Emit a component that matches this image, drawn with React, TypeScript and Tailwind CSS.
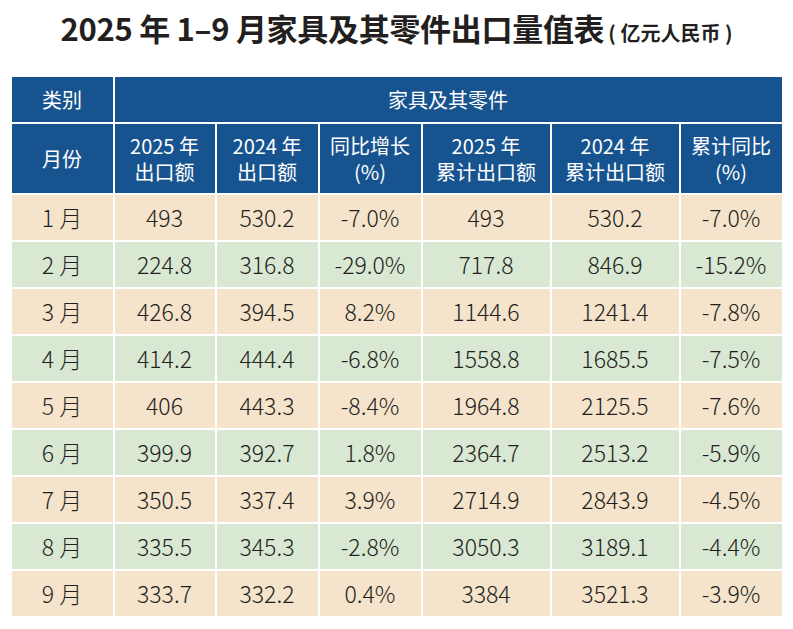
import React from 'react';

const rows: string[][] = [
    ['1 月', '493', '530.2', '-7.0%', '493', '530.2', '-7.0%'],
    ['2 月', '224.8', '316.8', '-29.0%', '717.8', '846.9', '-15.2%'],
    ['3 月', '426.8', '394.5', '8.2%', '1144.6', '1241.4', '-7.8%'],
    ['4 月', '414.2', '444.4', '-6.8%', '1558.8', '1685.5', '-7.5%'],
    ['5 月', '406', '443.3', '-8.4%', '1964.8', '2125.5', '-7.6%'],
    ['6 月', '399.9', '392.7', '1.8%', '2364.7', '2513.2', '-5.9%'],
    ['7 月', '350.5', '337.4', '3.9%', '2714.9', '2843.9', '-4.5%'],
    ['8 月', '335.5', '345.3', '-2.8%', '3050.3', '3189.1', '-4.4%'],
    ['9 月', '333.7', '332.2', '0.4%', '3384', '3521.3', '-3.9%'],
];

const heads: [string, string][] = [
    ['2025 年', '出口额'],
    ['2024 年', '出口额'],
    ['同比增长', '(%)'],
    ['2025 年', '累计出口额'],
    ['2024 年', '累计出口额'],
    ['累计同比', '(%)'],
];

const App: React.FC = () => {
    return (
        <div className="w-[793px] h-[629px] bg-white pt-[8px] font-['Noto_Sans_CJK_SC',sans-serif]">
            {/* 标题 */}
            <div className="flex items-baseline justify-center h-[40px] leading-[40px] text-[#231f20]">
                <span className="text-[31px] font-bold tracking-[-0.3px]">2025 年 1–9 月家具及其零件出口量值表</span>
                <span className="text-[20px] font-bold ml-[4px] whitespace-pre">( 亿元人民币 )</span>
            </div>

            <div className="mt-[29px] mx-auto w-[770px] grid grid-cols-[101px_100px_101px_101px_127px_127px_101px] grid-rows-[45px_69px_repeat(9,45px)] gap-[2px] bg-white">
                <div className="bg-[#17548f] text-white text-[20px] flex items-center justify-center">类别</div>
                <div className="col-span-6 bg-[#17548f] text-white text-[20px] flex items-center justify-center">家具及其零件</div>
                <div className="bg-[#17548f] text-white text-[20px] flex items-center justify-center">月份</div>
                {heads.map((h, i) => (
                    <div key={i} className="bg-[#17548f] text-white text-[20px] leading-[26px] flex flex-col items-center justify-center">
                        <span>{h[0]}</span>
                        <span>{h[1]}</span>
                    </div>
                ))}
                {rows.map((r, i) =>
                    r.map((c, j) => (
                        <div
                            key={i + '-' + j}
                            className={
                                'flex items-center justify-center text-[23px] font-light whitespace-pre text-[#231f20] ' +
                                (i % 2 === 0 ? 'bg-[#f5e3cb]' : 'bg-[#d8e8d3]')
                            }
                        >
                            {c}
                        </div>
                    ))
                )}
            </div>
        </div>
    );
};

export default App;
